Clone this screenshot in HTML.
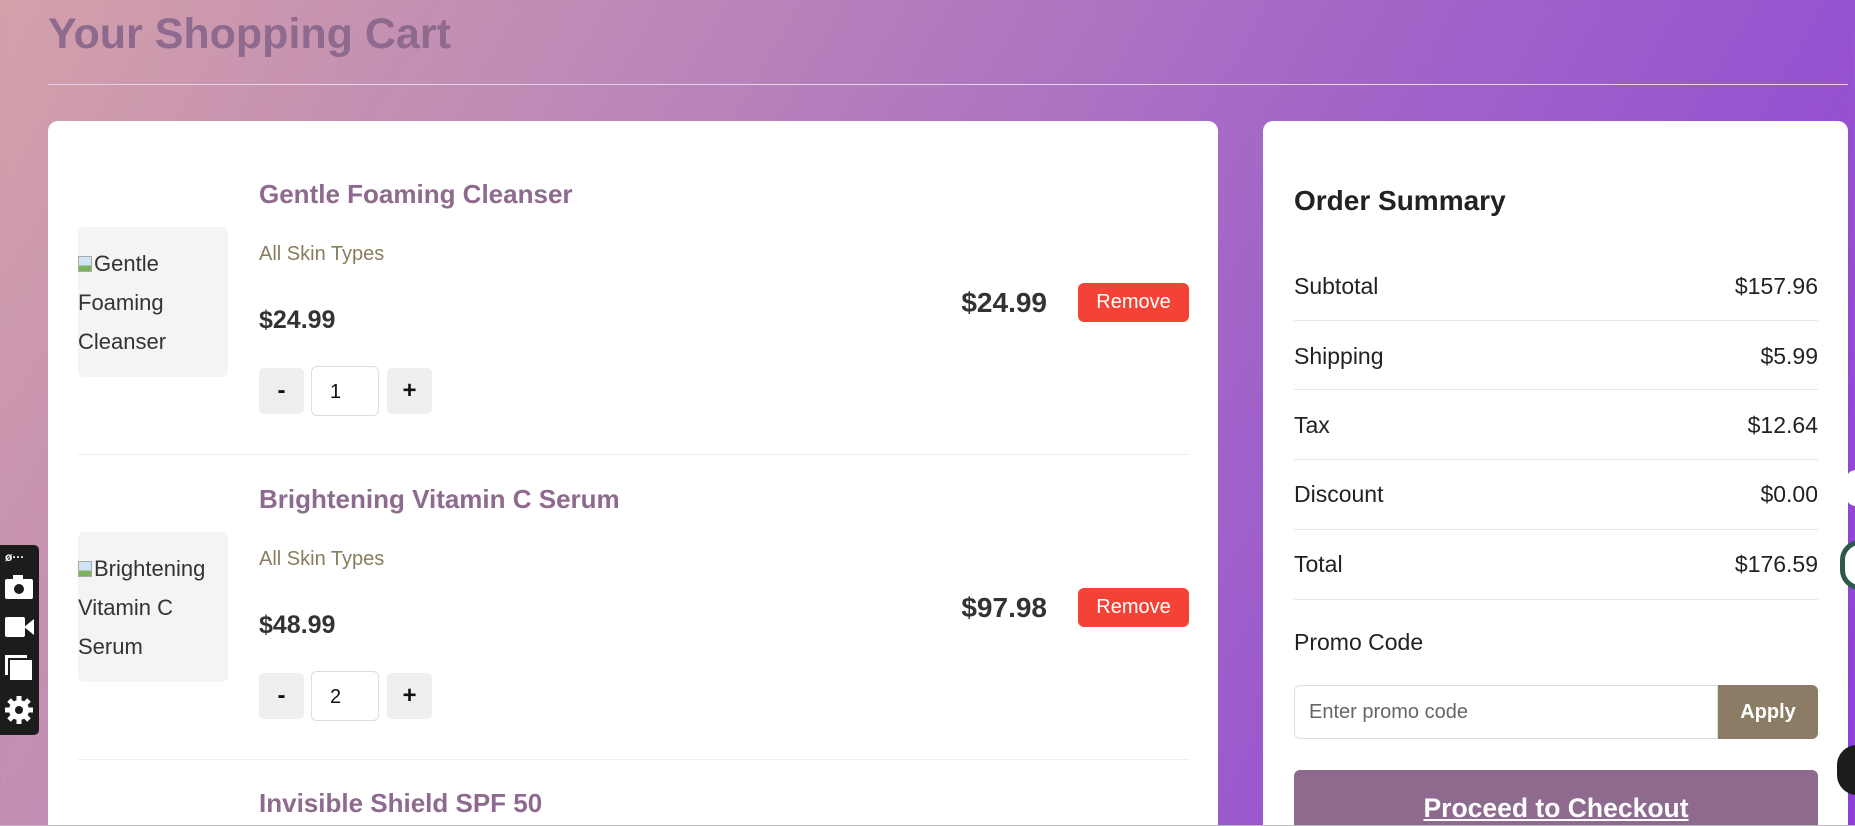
<!DOCTYPE html>
<html style="overflow:hidden;height:826px"><head><meta charset="utf-8"><style>
*{box-sizing:border-box;margin:0;padding:0}
body{width:1855px;height:826px;overflow:hidden;font-family:"Liberation Sans",Arial,sans-serif;background:linear-gradient(120deg,#d3a1a9 0%,#bb86b8 30%,#a266c8 60%,#8a40d8 100%);position:relative}
h1{position:absolute;left:48px;top:10px;font-size:43px;font-weight:bold;color:#8e6a8e}
.hr{position:absolute;left:48px;top:84px;width:1800px;height:1px;background:#e6d2ea}
.card{position:absolute;background:#fff;border-radius:10px 10px 0 0}
.l{left:48px;top:121px;width:1170px;height:705px}
.r{left:1263px;top:121px;width:585px;height:705px}
.img{position:absolute;left:30px;width:150px;height:150px;background:#f4f4f4;border-radius:6px;font-size:22px;line-height:39px;color:#333;padding-top:17px}
.bi{display:inline-block;width:14px;height:16px;border:1px solid #aaa;background:linear-gradient(#cfe3f5 60%,#7bb35a 60%);vertical-align:-1px;margin-right:2px}
.name{position:absolute;left:211px;font-size:26px;font-weight:bold;color:#8e6a8e}
.skin{position:absolute;left:211px;font-size:20px;color:#8a7c5e}
.price{position:absolute;left:211px;font-size:25px;font-weight:bold;color:#333}
.btn{position:absolute;width:45px;height:46px;background:#eee;border-radius:5px;font-size:24px;font-weight:bold;text-align:center;line-height:46px;color:#111}
.inp{position:absolute;left:263px;width:68px;height:50px;border:1px solid #ddd;border-radius:6px;font-size:20px;line-height:50px;padding-left:18px;color:#111}
.tot{position:absolute;right:171px;font-size:28px;font-weight:bold;color:#333}
.rm{position:absolute;left:1030px;width:111px;height:39px;background:#f44336;color:#fff;border-radius:6px;font-size:20px;text-align:center;line-height:39px}
.div{position:absolute;left:30px;width:1111px;height:1px;background:#eee}
.row{position:absolute;left:31px;width:524px;font-size:23px;color:#222;display:flex;justify-content:space-between}
.rd{position:absolute;left:31px;width:524px;height:1px;background:#e8e8e8}
</style></head><body>
<h1>Your Shopping Cart</h1><div class="hr"></div>
<div class="card l">
 <div class="img" style="top:106px"><span class="bi"></span>Gentle<br>Foaming<br>Cleanser</div>
 <div class="name" style="top:58px">Gentle Foaming Cleanser</div>
 <div class="skin" style="top:122px">All Skin Types</div>
 <div class="price" style="top:185px">$24.99</div>
 <div class="btn" style="left:211px;top:247px">-</div><div class="inp" style="top:245px">1</div><div class="btn" style="left:339px;top:247px">+</div>
 <div class="tot" style="top:166px">$24.99</div><div class="rm" style="top:162px">Remove</div>
 <div class="div" style="top:333px"></div>
 <div class="img" style="top:411px"><span class="bi"></span>Brightening<br>Vitamin C<br>Serum</div>
 <div class="name" style="top:363px">Brightening Vitamin C Serum</div>
 <div class="skin" style="top:427px">All Skin Types</div>
 <div class="price" style="top:490px">$48.99</div>
 <div class="btn" style="left:211px;top:552px">-</div><div class="inp" style="top:550px">2</div><div class="btn" style="left:339px;top:552px">+</div>
 <div class="tot" style="top:471px">$97.98</div><div class="rm" style="top:467px">Remove</div>
 <div class="div" style="top:638px"></div>
 <div class="name" style="top:667px">Invisible Shield SPF 50</div>
</div>
<div class="card r">
 <div style="position:absolute;left:31px;top:64px;font-size:28px;font-weight:bold;color:#222">Order Summary</div>
 <div class="row" style="top:152px"><span>Subtotal</span><span>$157.96</span></div><div class="rd" style="top:199px"></div>
 <div class="row" style="top:222px"><span>Shipping</span><span>$5.99</span></div><div class="rd" style="top:268px"></div>
 <div class="row" style="top:291px"><span>Tax</span><span>$12.64</span></div><div class="rd" style="top:338px"></div>
 <div class="row" style="top:360px"><span>Discount</span><span>$0.00</span></div><div class="rd" style="top:408px"></div>
 <div class="row" style="top:430px"><span>Total</span><span>$176.59</span></div><div class="rd" style="top:478px"></div>
 <div class="row" style="top:508px"><span>Promo Code</span></div>
 <div style="position:absolute;left:31px;top:564px;width:424px;height:54px;border:1px solid #ddd;border-radius:6px 0 0 6px;font-size:20px;color:#666;line-height:52px;padding-left:14px">Enter promo code</div>
 <div style="position:absolute;left:455px;top:564px;width:100px;height:54px;background:#8b7d65;border-radius:0 6px 6px 0;color:#fff;font-weight:bold;font-size:20px;text-align:center;line-height:54px">Apply</div>
 <div style="position:absolute;left:31px;top:649px;width:524px;height:80px;background:#8e6a8e;border-radius:6px;color:#fff;font-weight:bold;font-size:26.5px;text-align:center;padding-top:23px;text-decoration:underline">Proceed to Checkout</div>
</div>
<div style="position:absolute;left:0;top:825px;width:1855px;height:1px;background:#bbb"></div>
<div style="position:absolute;left:0;top:545px;width:39px;height:190px;background:#1c1c1c;border-radius:0 5px 5px 0">
 <div style="position:absolute;left:5px;top:5px;color:#fff;font-size:12px;font-weight:bold">ø···</div>
 <svg style="position:absolute;left:5px;top:30px" width="30" height="160" fill="#fff">
  <rect x="0" y="4" width="28" height="20" rx="2"/><rect x="8" y="0" width="10" height="6"/><circle cx="14" cy="14" r="5" fill="#1c1c1c"/>
  <rect x="0" y="42" width="20" height="20" rx="2"/><path d="M19 52 L29 44 L29 60 Z"/>
  <rect x="0" y="80" width="22" height="20"/><rect x="4" y="84" width="24" height="22" stroke="#1c1c1c" stroke-width="2"/>
  <circle cx="14" cy="135" r="10"/>
  <g stroke="#fff" stroke-width="5"><path d="M14 121 V149 M0 135 H28 M4 125 L24 145 M24 125 L4 145"/></g>
  <circle cx="14" cy="135" r="4" fill="#1c1c1c"/>
 </svg>
</div>
<div style="position:absolute;left:1846px;top:470px;width:20px;height:36px;background:#fff;border-radius:18px"></div>
<div style="position:absolute;left:1840px;top:540px;width:40px;height:50px;border:5px solid #2d5a4d;border-radius:25px;background:#fff"></div>
<div style="position:absolute;left:1837px;top:745px;width:40px;height:50px;background:#1c1c1c;border-radius:25px"></div>
</body></html>
